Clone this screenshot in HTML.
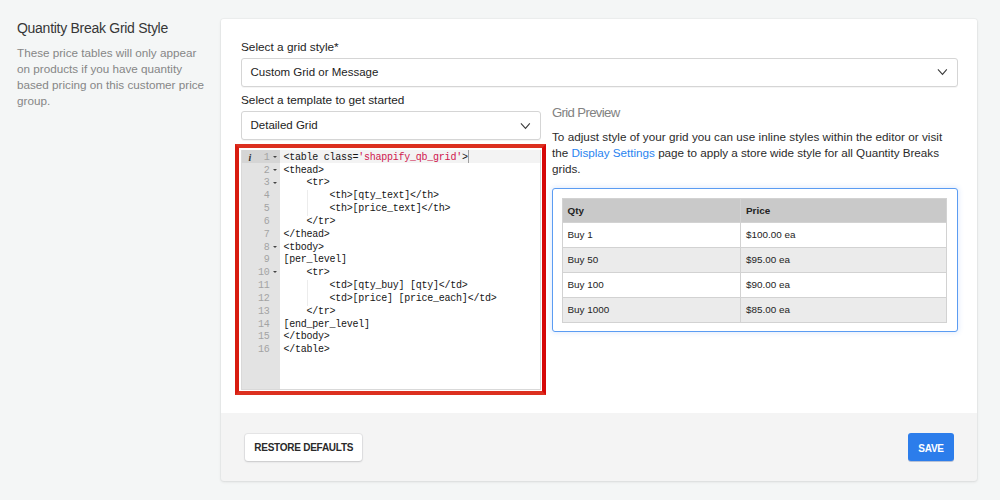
<!DOCTYPE html>
<html>
<head>
<meta charset="utf-8">
<style>
html,body{margin:0;padding:0;}
body{width:1000px;height:500px;overflow:hidden;background:#f4f6f6;font-family:"Liberation Sans",sans-serif;position:relative;color:#212b36;}
.a{position:absolute;white-space:nowrap;}
#title{left:17px;top:20px;font-size:14px;letter-spacing:-0.28px;line-height:16px;color:#363636;}
#desc{left:17px;top:45px;font-size:11.7px;line-height:16px;color:#868686;}
#card{left:221px;top:19px;width:756px;height:462px;background:#f4f4f4;border-radius:3px;box-shadow:0 0 0 1px rgba(63,63,68,0.03),0 1px 3px 0 rgba(63,63,68,0.12);overflow:hidden;}
#cardtop{left:0;top:0;width:756px;height:394px;background:#fff;}
.lbl{font-size:11.8px;line-height:16px;color:#232323;}
.sel{box-sizing:border-box;border:1px solid #d5d5d5;border-radius:3px;background:#fff;box-shadow:0 1px 0 rgba(0,0,0,0.04);}
.seltxt{font-size:11.5px;line-height:16px;color:#232323;}
#editor{left:235px;top:144px;width:311px;height:251px;box-sizing:border-box;border:4px solid #dc3020;border-color:#dc3020 #d60808 #dc3020 #d81c10;}
#ed-in{left:241px;top:150px;width:300px;height:240px;box-sizing:border-box;border:1px solid #d9d9d9;border-top:none;background:#fff;overflow:hidden;}
#gutter{position:absolute;left:0;top:0;width:38px;height:240px;background:#e3e3e3;}
#gact{position:absolute;left:0;top:0px;width:38px;height:12.6px;background:#d5d5d5;}
#cact{position:absolute;left:38px;top:0px;width:262px;height:12.6px;background:#f3f3f3;}
#cursor{position:absolute;left:226px;top:0.2px;width:1.2px;height:12.4px;background:#a0a0a0;}
.ln{position:absolute;left:0;width:27.5px;text-align:right;font-family:"Liberation Mono",monospace;font-size:10px;letter-spacing:-0.3px;line-height:12.83px;color:#a3a3a3;}
.code{position:absolute;left:41.6px;font-family:"Liberation Mono",monospace;font-size:10px;letter-spacing:-0.25px;line-height:12.83px;color:#151515;white-space:pre;}
.str{color:#d0164e;}
.fold{position:absolute;left:30.8px;width:0;height:0;border-left:2px solid transparent;border-right:2px solid transparent;border-top:2.5px solid #444;}
.guide{position:absolute;left:64.8px;width:1px;background:#ececec;}
#info{position:absolute;left:6.5px;top:1.6px;font-family:"Liberation Serif",serif;font-style:italic;font-weight:bold;font-size:10px;line-height:12.83px;color:#333;}
#gp{left:552px;top:105.4px;font-size:13.2px;letter-spacing:-0.66px;line-height:16px;color:#828282;}
#gdesc{left:552px;top:128.8px;font-size:11.7px;line-height:16px;color:#2b2b2b;}
#gdesc a{color:#2a84f0;text-decoration:none;}
#pbox{left:552px;top:188px;width:406px;height:143.5px;box-sizing:border-box;border:1px solid #5b9cf2;border-radius:3px;box-shadow:0 0 5px 1px rgba(66,133,244,0.16);background:#fff;}
.row{position:absolute;left:562px;width:385px;box-sizing:border-box;border:1px solid #d2d2d2;border-top:none;}
.cell{position:absolute;top:0;font-size:9.9px;line-height:24px;color:#232323;}
.btn{box-sizing:border-box;border-radius:3px;font-size:10px;letter-spacing:-0.25px;font-weight:bold;text-align:center;}
</style>
</head>
<body>
<div class="a" id="title">Quantity Break Grid Style</div>
<div class="a" id="desc">These price tables will only appear<br>on products if you have quantity<br>based pricing on this customer price<br>group.</div>

<div class="a" id="card">
  <div class="a" id="cardtop"></div>
</div>

<div class="a lbl" id="lbl1" style="left:241px;top:38.8px;">Select a grid style*</div>
<div class="a sel" id="sel1" style="left:241px;top:57.5px;width:716.5px;height:29px;"></div>
<div class="a seltxt" id="sel1t" style="left:250.5px;top:63.8px;">Custom Grid or Message</div>
<svg class="a" style="left:936px;top:66px;" width="12" height="10" viewBox="0 0 12 10"><path d="M1.9 3.3 L6.5 8.4 L10.8 3.3" fill="none" stroke="#3a3a3a" stroke-width="1.05"/></svg>

<div class="a lbl" id="lbl2" style="left:241px;top:91.8px;">Select a template to get started</div>
<div class="a sel" id="sel2" style="left:241px;top:111px;width:300px;height:29px;"></div>
<div class="a seltxt" id="sel2t" style="left:250.5px;top:117px;">Detailed Grid</div>
<svg class="a" style="left:519px;top:120px;" width="12" height="10" viewBox="0 0 12 10"><path d="M1.9 3.3 L6.5 8.4 L10.8 3.3" fill="none" stroke="#3a3a3a" stroke-width="1.05"/></svg>

<div class="a" id="editor"></div>
<div class="a" id="ed-in">
  <div id="gutter"></div>
  <div id="gact"></div>
  <div id="cact"></div>
  <div id="info">i</div>
<div class="ln" style="top:1.80px">1</div>
<div class="fold" style="top:6.00px"></div>
<div class="ln" style="top:14.63px">2</div>
<div class="fold" style="top:18.83px"></div>
<div class="ln" style="top:27.46px">3</div>
<div class="fold" style="top:31.66px"></div>
<div class="ln" style="top:40.29px">4</div>
<div class="ln" style="top:53.12px">5</div>
<div class="ln" style="top:65.95px">6</div>
<div class="ln" style="top:78.78px">7</div>
<div class="ln" style="top:91.61px">8</div>
<div class="fold" style="top:95.81px"></div>
<div class="ln" style="top:104.44px">9</div>
<div class="ln" style="top:117.27px">10</div>
<div class="fold" style="top:121.47px"></div>
<div class="ln" style="top:130.10px">11</div>
<div class="ln" style="top:142.93px">12</div>
<div class="ln" style="top:155.76px">13</div>
<div class="ln" style="top:168.59px">14</div>
<div class="ln" style="top:181.42px">15</div>
<div class="ln" style="top:194.25px">16</div>
<div class="guide" style="top:40.29px;height:12.83px"></div>
<div class="guide" style="top:53.12px;height:12.83px"></div>
<div class="guide" style="top:130.10px;height:12.83px"></div>
<div class="guide" style="top:142.93px;height:12.83px"></div>
<div class="code" style="top:1.80px">&lt;table class=<span class="str">'shappify_qb_grid'</span>&gt;</div>
<div class="code" style="top:14.63px">&lt;thead&gt;</div>
<div class="code" style="top:27.46px">    &lt;tr&gt;</div>
<div class="code" style="top:40.29px">        &lt;th&gt;[qty_text]&lt;/th&gt;</div>
<div class="code" style="top:53.12px">        &lt;th&gt;[price_text]&lt;/th&gt;</div>
<div class="code" style="top:65.95px">    &lt;/tr&gt;</div>
<div class="code" style="top:78.78px">&lt;/thead&gt;</div>
<div class="code" style="top:91.61px">&lt;tbody&gt;</div>
<div class="code" style="top:104.44px">[per_level]</div>
<div class="code" style="top:117.27px">    &lt;tr&gt;</div>
<div class="code" style="top:130.10px">        &lt;td&gt;[qty_buy] [qty]&lt;/td&gt;</div>
<div class="code" style="top:142.93px">        &lt;td&gt;[price] [price_each]&lt;/td&gt;</div>
<div class="code" style="top:155.76px">    &lt;/tr&gt;</div>
<div class="code" style="top:168.59px">[end_per_level]</div>
<div class="code" style="top:181.42px">&lt;/tbody&gt;</div>
<div class="code" style="top:194.25px">&lt;/table&gt;</div>
  <div id="cursor"></div>
</div>

<div class="a" id="gp">Grid Preview</div>
<div class="a" id="gdesc"><span style="letter-spacing:0.03px">To adjust style of your grid you can use inline styles within the editor or visit</span><br><span style="letter-spacing:-0.02px">the <a>Display Settings</a> page to apply a store wide style for all Quantity Breaks</span><br>grids.</div>

<div class="a" id="pbox"></div>
<div class="row" style="top:198px;height:24.5px;border-top:1px solid #d2d2d2;background:#c9c9c9;"><div class="cell" style="left:4.5px;font-weight:bold;line-height:23px;">Qty</div><div class="cell" style="left:183px;font-weight:bold;line-height:23px;">Price</div></div>
<div class="row" style="top:222.5px;height:25px;background:#fff;"><div class="cell" style="left:4.5px;">Buy 1</div><div class="cell" style="left:183px;">$100.00 ea</div></div>
<div class="row" style="top:247.5px;height:25px;background:#ebebeb;"><div class="cell" style="left:4.5px;">Buy 50</div><div class="cell" style="left:183px;">$95.00 ea</div></div>
<div class="row" style="top:272.5px;height:25px;background:#fff;"><div class="cell" style="left:4.5px;">Buy 100</div><div class="cell" style="left:183px;">$90.00 ea</div></div>
<div class="row" style="top:297.5px;height:25px;background:#ebebeb;"><div class="cell" style="left:4.5px;">Buy 1000</div><div class="cell" style="left:183px;">$85.00 ea</div></div>
<div class="a" style="left:740px;top:198px;width:1px;height:124.5px;background:#d2d2d2;"></div>

<div class="a btn" id="restore" style="left:244.5px;top:433.5px;width:117.5px;height:27.5px;background:#fff;box-shadow:0 0 0 1px rgba(63,63,68,0.07),0 1px 2px rgba(63,63,68,0.18);color:#2a2a2a;line-height:27.5px;padding-left:1px;">RESTORE DEFAULTS</div>
<div class="a btn" id="save" style="left:908px;top:433px;width:46px;height:28px;background:#2c7deb;box-shadow:0 1px 0 rgba(0,40,120,0.25);color:#fff;line-height:31px;">SAVE</div>
</body>
</html>
